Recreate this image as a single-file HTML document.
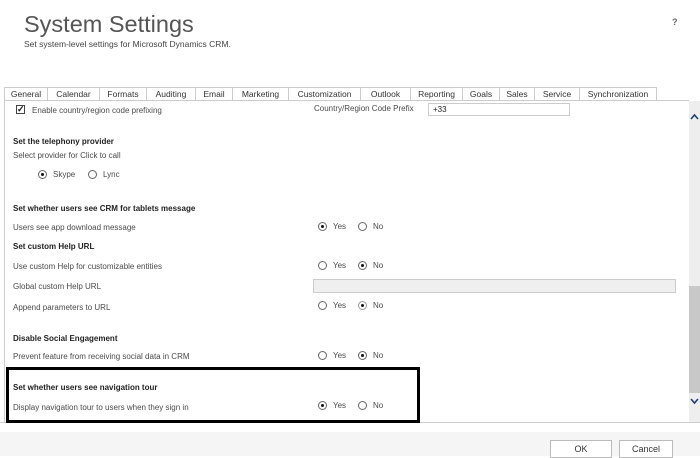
<!DOCTYPE html>
<html><head><style>
*{margin:0;padding:0;box-sizing:border-box}
body{width:700px;height:456px;position:relative;overflow:hidden;background:#fff;font-family:"Liberation Sans",sans-serif;color:#4a4a4a;font-size:8px}
.a{position:absolute;white-space:nowrap}
.b{font-weight:bold;color:#222}
.r{position:absolute;width:9px;height:9px;border:1px solid #666;border-radius:50%;background:#fff}
.r.on::after{content:"";position:absolute;left:2px;top:2px;width:3px;height:3px;border-radius:50%;background:#111}
.tabs{position:absolute;left:8px;top:87px;height:14px;display:flex}
.tabs div{border:1px solid #ccc;border-bottom:none;border-left:none;font-size:8.5px;color:#333;line-height:13px;text-align:center;background:#fff}
</style></head><body>
<div class="a" style="left:24px;top:11px;font-size:23.5px;color:#555">System Settings</div>
<div class="a" style="left:24px;top:39px;font-size:8.5px;color:#444">Set system-level settings for Microsoft Dynamics CRM.</div>
<div class="a" style="left:672px;top:17px;font-size:9px;font-weight:bold;color:#666">?</div>
<div class="tabs" style="left:4px">
<div style="width:44px;border-left:1px solid #ccc">General</div><div style="width:52px">Calendar</div><div style="width:47px">Formats</div><div style="width:49px">Auditing</div><div style="width:37px">Email</div><div style="width:56px">Marketing</div><div style="width:72px">Customization</div><div style="width:50px">Outlook</div><div style="width:52px">Reporting</div><div style="width:37px">Goals</div><div style="width:35px">Sales</div><div style="width:45px">Service</div><div style="width:77px">Synchronization</div>
</div>
<div class="a" style="left:4px;top:100px;width:685px;height:1px;background:#ccc"></div>
<div class="a" style="left:4px;top:100px;width:1px;height:322px;background:#ccc"></div>
<div class="a" style="left:0;top:422px;width:700px;height:1px;background:#ccc"></div>
<div class="a" style="left:0;top:432px;width:700px;height:24px;background:#f5f5f5"></div>
<!-- scrollbar -->
<div class="a" style="left:689px;top:101px;width:11px;height:321px;background:#eee"></div>
<div class="a" style="left:689px;top:286px;width:11px;height:107px;background:#c8c8c8"></div>
<svg class="a" style="left:690px;top:113px" width="9" height="8"><path d="M1 6 L4.5 2 L8 6" stroke="#1f3f6e" stroke-width="1.6" fill="none"/></svg>
<svg class="a" style="left:690px;top:397px" width="9" height="8"><path d="M1 2 L4.5 6 L8 2" stroke="#1f3f6e" stroke-width="1.6" fill="none"/></svg>
<!-- checkbox -->
<div class="a" style="left:16px;top:105px;width:9px;height:9px;border:1px solid #444;font-size:9px;line-height:7px;color:#111;text-align:center;font-weight:bold">✓</div>
<div class="a" style="left:32px;top:106px">Enable country/region code prefixing</div>
<div class="a" style="left:314px;top:104px">Country/Region Code Prefix</div>
<div class="a" style="left:428px;top:103px;width:142px;height:13px;border:1px solid #ccc;padding-left:4px;line-height:11px;color:#222">+33</div>
<div class="a b" style="left:13px;top:137px">Set the telephony provider</div>
<div class="a" style="left:13px;top:151px">Select provider for Click to call</div>
<div class="r on" style="left:38px;top:170px"></div><div class="a" style="left:53px;top:170px">Skype</div>
<div class="r" style="left:88px;top:170px"></div><div class="a" style="left:103px;top:170px">Lync</div>
<div class="a b" style="left:13px;top:204px">Set whether users see CRM for tablets message</div>
<div class="a" style="left:13px;top:223px">Users see app download message</div>
<div class="r on" style="left:318px;top:222px"></div><div class="a" style="left:333px;top:222px">Yes</div>
<div class="r" style="left:358px;top:222px"></div><div class="a" style="left:373px;top:222px">No</div>
<div class="a b" style="left:13px;top:242px">Set custom Help URL</div>
<div class="a" style="left:13px;top:262px">Use custom Help for customizable entities</div>
<div class="r" style="left:318px;top:261px"></div><div class="a" style="left:333px;top:261px">Yes</div>
<div class="r on" style="left:358px;top:261px"></div><div class="a" style="left:373px;top:261px">No</div>
<div class="a" style="left:13px;top:282px">Global custom Help URL</div>
<div class="a" style="left:313px;top:279px;width:363px;height:14px;border:1px solid #ccc;background:#efefef"></div>
<div class="a" style="left:13px;top:303px">Append parameters to URL</div>
<div class="r" style="left:318px;top:301px"></div><div class="a" style="left:333px;top:301px">Yes</div>
<div class="r on" style="left:358px;top:301px;border-color:#999"></div><div class="a" style="left:373px;top:301px">No</div>
<div class="a b" style="left:13px;top:334px">Disable Social Engagement</div>
<div class="a" style="left:13px;top:352px">Prevent feature from receiving social data in CRM</div>
<div class="r" style="left:318px;top:351px"></div><div class="a" style="left:333px;top:351px">Yes</div>
<div class="r on" style="left:358px;top:351px"></div><div class="a" style="left:373px;top:351px">No</div>
<div class="a b" style="left:13px;top:383px">Set whether users see navigation tour</div>
<div class="a" style="left:13px;top:403px">Display navigation tour to users when they sign in</div>
<div class="r on" style="left:318px;top:401px"></div><div class="a" style="left:333px;top:401px">Yes</div>
<div class="r" style="left:358px;top:401px"></div><div class="a" style="left:373px;top:401px">No</div>
<div class="a" style="left:6px;top:367px;width:414px;height:56px;border:3px solid #000"></div>
<!-- buttons -->
<div class="a" style="left:550px;top:440px;width:62px;height:18px;border:1px solid #bbb;background:#fff;text-align:center;line-height:16px;font-size:9px;color:#333">OK</div>
<div class="a" style="left:619px;top:440px;width:54px;height:18px;border:1px solid #bbb;background:#fff;text-align:center;line-height:16px;font-size:9px;color:#333">Cancel</div>
</body></html>
